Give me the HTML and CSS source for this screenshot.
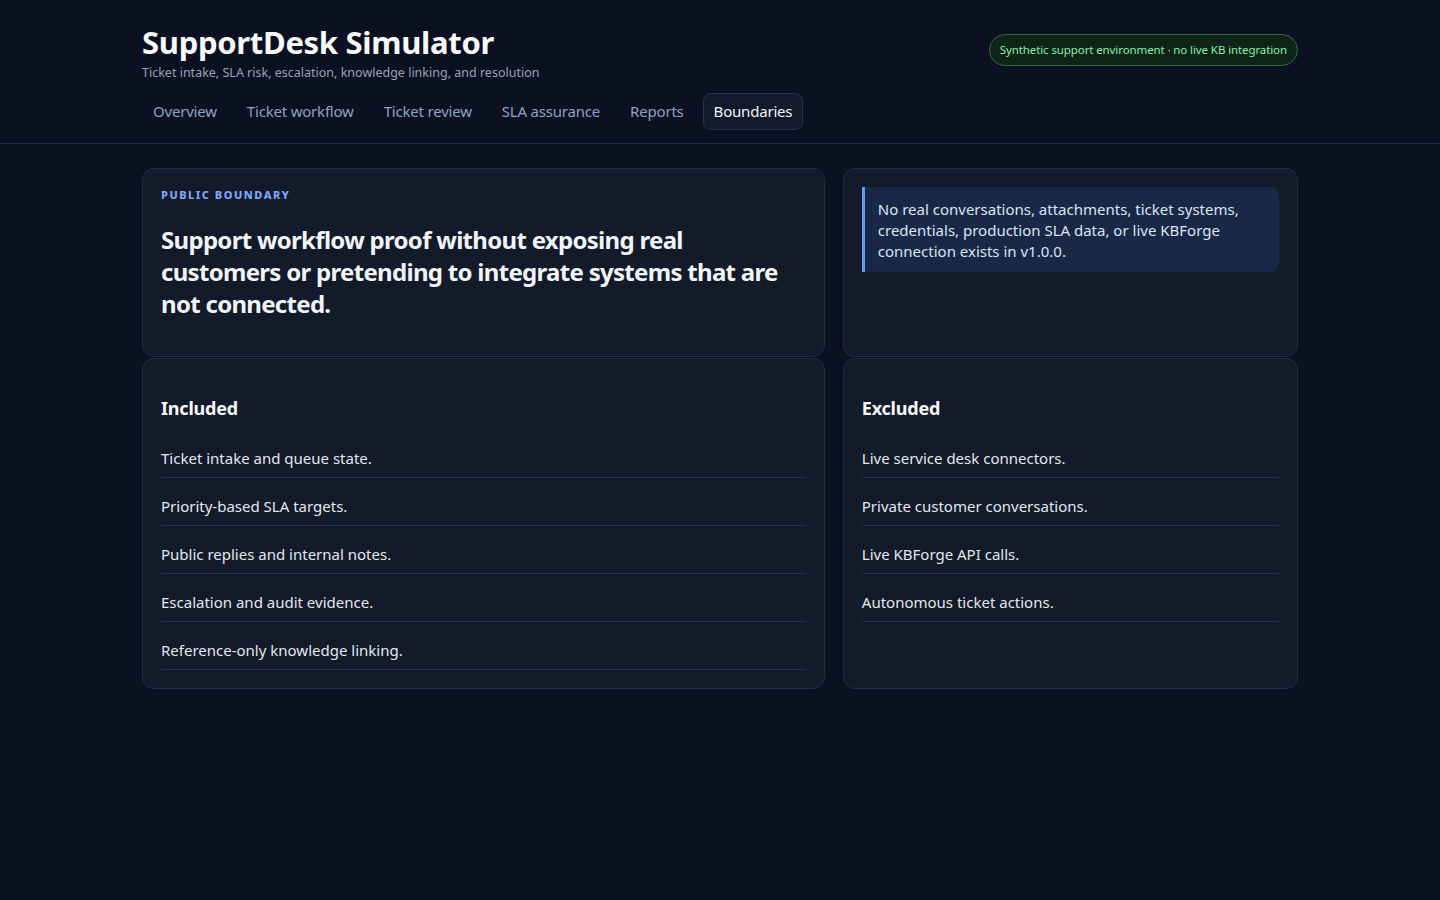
FILE: index.html
```html
<!DOCTYPE html>
<html lang="en">
<head>
    <meta charset="UTF-8">
    <meta name="viewport" content="width=device-width, initial-scale=1.0">
    <title>SupportDesk Simulator</title>
    <link rel="stylesheet" href="styles.css">
</head>
<body>
    <header class="topbar">
        <div class="wrap">
            <div class="brand-row">
                <div class="brand">
                    <h1>SupportDesk Simulator</h1>
                    <p class="tagline">Ticket intake, SLA risk, escalation, knowledge linking, and resolution</p>
                </div>
                <span class="env-badge">Synthetic support environment · no live KB integration</span>
            </div>
            <nav class="tabs">
                <a href="#">Overview</a>
                <a href="#">Ticket workflow</a>
                <a href="#">Ticket review</a>
                <a href="#">SLA assurance</a>
                <a href="#">Reports</a>
                <a href="#" class="active">Boundaries</a>
            </nav>
        </div>
    </header>

    <main class="wrap board">
        <section class="card hero">
            <div class="eyebrow">Public boundary</div>
            <h2>Support workflow proof without exposing real customers or pretending to integrate systems that are not connected.</h2>
        </section>
        <section class="card">
            <div class="callout">No real conversations, attachments, ticket systems, credentials, production SLA data, or live KBForge connection exists in v1.0.0.</div>
        </section>

        <section class="card">
            <h3>Included</h3>
            <ul class="scope-list">
                <li>Ticket intake and queue state.</li>
                <li>Priority-based SLA targets.</li>
                <li>Public replies and internal notes.</li>
                <li>Escalation and audit evidence.</li>
                <li>Reference-only knowledge linking.</li>
            </ul>
        </section>
        <section class="card">
            <h3>Excluded</h3>
            <ul class="scope-list">
                <li>Live service desk connectors.</li>
                <li>Private customer conversations.</li>
                <li>Live KBForge API calls.</li>
                <li>Autonomous ticket actions.</li>
            </ul>
        </section>
    </main>
</body>
</html>
```
FILE: styles.css
```css
body {
    margin: 0;
    background-color: #0b1120;
    color: #e2e8f0;
    font-family: "Noto Sans", "Open Sans", sans-serif;
}

.wrap {
    width: 1156px;
    margin: 0 auto;
}

.topbar {
    border-bottom: 1px solid #1e293b;
    padding-top: 21px;
}

.brand-row {
    display: flex;
    justify-content: space-between;
    align-items: flex-start;
}

h1 {
    margin: 0;
    font-size: 31px;
    line-height: 42px;
    font-weight: 700;
    letter-spacing: -0.3px;
    color: #f8fafc;
}

.tagline {
    margin: 1px 0 0;
    font-size: 12.5px;
    line-height: 18px;
    color: #94a3b8;
}

.env-badge {
    margin-top: 13px;
    padding: 0 10px;
    height: 30px;
    line-height: 30px;
    border: 1px solid #2f6b45;
    border-radius: 16px;
    background-color: #0f2418;
    color: #86efac;
    font-size: 11.5px;
    letter-spacing: -0.1px;
}

.tabs {
    display: flex;
    gap: 8px;
    padding: 11px 0 13px;
}

    .tabs a {
        padding: 8px 10px;
        border: 1px solid transparent;
        border-radius: 8px;
        color: #8ea3c4;
        font-size: 15px;
        line-height: 19px;
        letter-spacing: -0.2px;
        text-decoration: none;
    }

    .tabs a.active {
        background-color: #111a2b;
        border-color: #263349;
        color: #f1f5f9;
    }

.board {
    display: grid;
    grid-template-columns: 1.5fr 1fr;
    column-gap: 18px;
    row-gap: 1px;
    margin-top: 24px;
}

.card {
    background-color: #131a2a;
    border: 1px solid #222d42;
    border-radius: 12px;
    padding: 18px;
}

.eyebrow {
    font-size: 11px;
    line-height: 16px;
    font-weight: 800;
    letter-spacing: 1.5px;
    text-transform: uppercase;
    color: #7ea8f5;
}

.hero h2 {
    margin: 21px 0 18px;
    font-size: 24px;
    line-height: 32px;
    font-weight: 700;
    letter-spacing: -0.7px;
    color: #f1f5f9;
}

.callout {
    background-color: #1a2847;
    border-left: 3px solid #5f9cf7;
    border-radius: 0 8px 8px 0;
    padding: 12px 14px 10px 13px;
    font-size: 15px;
    line-height: 21px;
    color: #dbe4f3;
}

h3 {
    margin: 19px 0 10px;
    font-size: 18px;
    line-height: 24px;
    font-weight: 700;
    letter-spacing: -0.2px;
    color: #f8fafc;
}

.scope-list {
    list-style: none;
    margin: 0;
    padding: 0;
}

    .scope-list li {
        padding: 17px 0 8px;
        border-bottom: 1px solid #263247;
        font-size: 15px;
        line-height: 22px;
        color: #e2e8f0;
    }
```
